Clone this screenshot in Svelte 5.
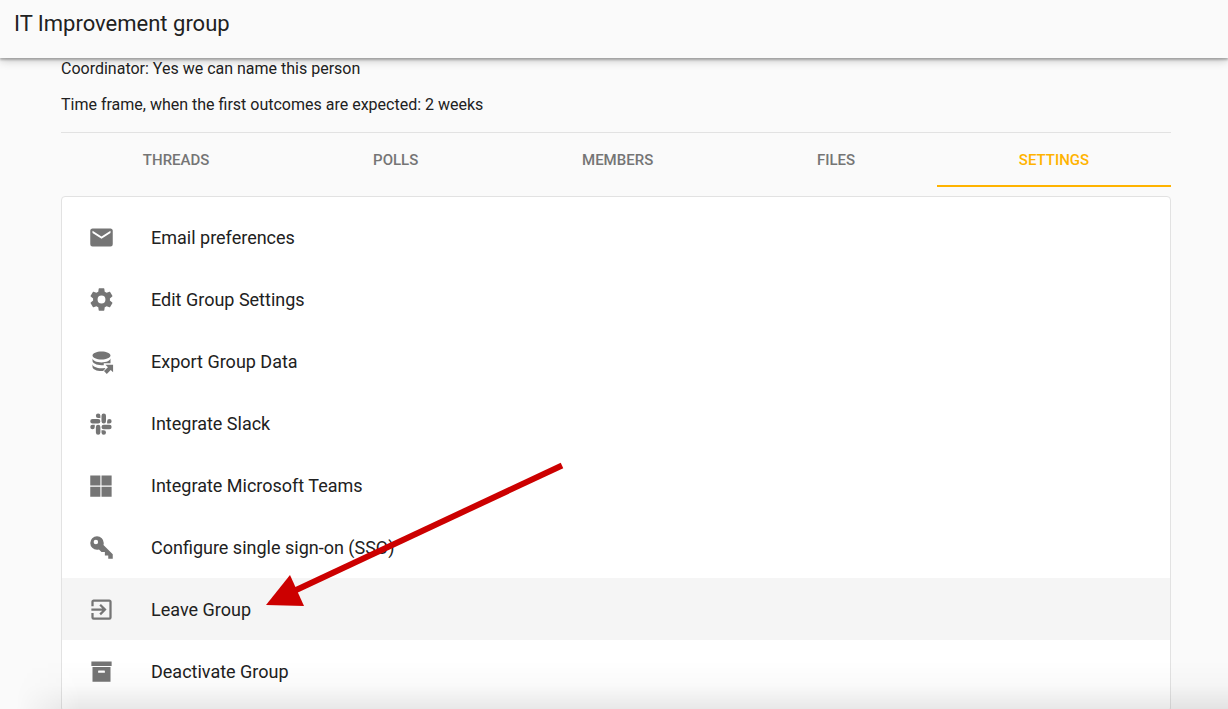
<script>
  const tabs = ['Threads', 'Polls', 'Members', 'Files', 'Settings'];
  let active = $state('Settings');

  const items = [
    {
      label: 'Email preferences',
      icon: 'M20,8L12,13L4,8V6L12,11L20,6M20,4H4C2.89,4 2,4.89 2,6V18A2,2 0 0,0 4,20H20A2,2 0 0,0 22,18V6C22,4.89 21.1,4 20,4Z'
    },
    {
      label: 'Edit Group Settings',
      icon: 'M12,15.5A3.5,3.5 0 0,1 8.5,12A3.5,3.5 0 0,1 12,8.5A3.5,3.5 0 0,1 15.5,12A3.5,3.5 0 0,1 12,15.5M19.43,12.97C19.47,12.65 19.5,12.33 19.5,12C19.5,11.67 19.47,11.34 19.43,11L21.54,9.37C21.73,9.22 21.78,8.95 21.66,8.73L19.66,5.27C19.54,5.05 19.27,4.96 19.05,5.05L16.56,6.05C16.04,5.66 15.5,5.32 14.87,5.07L14.5,2.42C14.46,2.18 14.25,2 14,2H10C9.75,2 9.54,2.18 9.5,2.42L9.13,5.07C8.5,5.32 7.96,5.66 7.44,6.05L4.95,5.05C4.73,4.96 4.46,5.05 4.34,5.27L2.34,8.73C2.21,8.95 2.27,9.22 2.46,9.37L4.57,11C4.53,11.34 4.5,11.67 4.5,12C4.5,12.33 4.53,12.65 4.57,12.97L2.46,14.63C2.27,14.78 2.21,15.05 2.34,15.27L4.34,18.73C4.46,18.95 4.73,19.03 4.95,18.95L7.44,17.94C7.96,18.34 8.5,18.68 9.13,18.93L9.5,21.58C9.54,21.82 9.75,22 10,22H14C14.25,22 14.46,21.82 14.5,21.58L14.87,18.93C15.5,18.67 16.04,18.34 16.56,17.94L19.05,18.95C19.27,19.03 19.54,18.95 19.66,18.73L21.66,15.27C21.78,15.05 21.73,14.78 21.54,14.63L19.43,12.97Z'
    },
    {
      label: 'Export Group Data',
      icon: 'M12,3C7.58,3 4,4.6 4,6.6C4,8.6 7.58,10.2 12,10.2C16.42,10.2 20,8.6 20,6.6C20,4.6 16.42,3 12,3M4,9.2V11.4C4,13.6 7.58,15.3 12,15.3H14V13.6H20V9.2C20,11.2 16.42,12.9 12,12.9C7.58,12.9 4,11.2 4,9.2M4,14.2V16.6C4,18.8 7.58,20.5 12,20.5L13.4,20.4L15.5,18.2L14.6,17.7C13.8,17.9 12.9,18 12,18C7.58,18 4,16.3 4,14.2M15.5,14.8L17.7,17L14.2,20.5L16.7,23L20.2,19.5L22.3,21.6V14.8H15.5Z'
    },
    {
      label: 'Integrate Slack',
      icon: 'M6,15A2,2 0 0,1 4,17A2,2 0 0,1 2,15A2,2 0 0,1 4,13H6V15M7,15A2,2 0 0,1 9,13A2,2 0 0,1 11,15V20A2,2 0 0,1 9,22A2,2 0 0,1 7,20V15M9,7A2,2 0 0,1 7,5A2,2 0 0,1 9,3A2,2 0 0,1 11,5V7H9M9,8A2,2 0 0,1 11,10A2,2 0 0,1 9,12H4A2,2 0 0,1 2,10A2,2 0 0,1 4,8H9M17,10A2,2 0 0,1 19,8A2,2 0 0,1 21,10A2,2 0 0,1 19,12H17V10M16,10A2,2 0 0,1 14,12A2,2 0 0,1 12,10V5A2,2 0 0,1 14,3A2,2 0 0,1 16,5V10M14,18A2,2 0 0,1 16,20A2,2 0 0,1 14,22A2,2 0 0,1 12,20V18H14M14,17A2,2 0 0,1 12,15A2,2 0 0,1 14,13H19A2,2 0 0,1 21,15A2,2 0 0,1 19,17H14Z'
    },
    {
      label: 'Integrate Microsoft Teams',
      icon: 'M2,3H11V12H2V3M11,22H2V13H11V22M21,3V12H12V3H21M21,22H12V13H21V22Z'
    },
    {
      label: 'Configure single sign-on (SSO)',
      icon: 'M22,18V22H18V19H15V16H12L9.74,13.74C9.19,13.91 8.61,14 8,14A6,6 0 0,1 2,8A6,6 0 0,1 8,2A6,6 0 0,1 14,8C14,8.61 13.91,9.19 13.74,9.74L22,18M7,5A2,2 0 0,0 5,7A2,2 0 0,0 7,9A2,2 0 0,0 9,7A2,2 0 0,0 7,5Z'
    },
    {
      label: 'Leave Group',
      highlighted: true,
      icon: 'M19,3H5C3.89,3 3,3.89 3,5V9H5V5H19V19H5V15H3V19A2,2 0 0,0 5,21H19A2,2 0 0,0 21,19V5C21,3.89 20.1,3 19,3M10.08,15.58L11.5,17L16.5,12L11.5,7L10.08,8.41L12.67,11H3V13H12.67L10.08,15.58Z'
    },
    {
      label: 'Deactivate Group',
      icon: 'M3,3H21V7H3V3M4,8H20V21H4V8M9.5,11A0.5,0.5 0 0,0 9,11.5V13H15V11.5A0.5,0.5 0 0,0 14.5,11H9.5Z'
    }
  ];
</script>

<div class="page">
  <header>
    <h1>IT Improvement group</h1>
  </header>

  <main>
    <section class="about">
      <p>Coordinator: Yes we can name this person</p>
      <p>Time frame, when the first outcomes are expected: 2 weeks</p>
    </section>

    <nav>
      {#each tabs as tab}
        <button class="tab" class:active={active === tab} onclick={() => (active = tab)}>{tab}</button>
      {/each}
    </nav>

    <div class="card">
      {#each items as item}
        <button class="row" class:highlighted={item.highlighted}>
          <svg viewBox="0 0 24 24" aria-hidden="true"><path d={item.icon} /></svg>
          <span>{item.label}</span>
        </button>
      {/each}
    </div>
  </main>

  <!-- Arrow pointing at the Leave Group row -->
  <svg class="arrow" viewBox="0 0 300 146" aria-hidden="true">
    <path d="M296 5.500L28 131" />
    <polygon points="0,145 24,115 38,146" />
  </svg>
  <div class="fade"></div>
</div>

<style>
  :global(body) {
    background: #fafafa;
  }

  .page {
    position: relative;
    height: 100vh;
    overflow: hidden;
    font-family: Roboto, 'Liberation Sans', sans-serif;
    color: #212121;
  }

  header {
    position: relative;
    z-index: 1;
    box-sizing: border-box;
    padding: 10px 14px 20px;
    background: #fafafa;
    box-shadow: 0 2px 2px rgba(0, 0, 0, 0.24), 0 2px 9px rgba(0, 0, 0, 0.24);
  }

  h1 {
    margin: 0;
    font-size: 22px;
    line-height: 28px;
    font-weight: 400;
  }

  main {
    padding: 0 57px 0 61px;
  }

  .about {
    padding: 1px 0 17px;
    border-bottom: 1px solid #e2e2e2;
  }

  p {
    margin: 0 0 16px;
    font-size: 16px;
    line-height: 20px;
  }

  p:last-child {
    margin: 0;
  }

  button {
    border: 0;
    background: none;
    font-family: inherit;
    cursor: pointer;
  }

  nav {
    display: flex;
    height: 54px;
    margin-bottom: 9px;
  }

  .tab {
    flex: 1 1 auto;
    padding: 2px 0 0;
    border-bottom: 2px solid transparent;
    color: #757575;
    font-size: 15px;
    font-weight: 500;
    text-transform: uppercase;
  }

  .tab.active {
    color: #ffb300;
    border-color: #ffb300;
  }

  .card {
    padding: 9px 0;
    border: 1px solid #e2e2e2;
    border-radius: 4px;
    background: #fff;
  }

  .row {
    display: flex;
    align-items: center;
    gap: 36px;
    width: 100%;
    height: 62px;
    padding: 0 26px;
    color: #212121;
    font-size: 18px;
    text-align: left;
  }

  .row.highlighted {
    background: #f5f5f5;
  }

  .row svg {
    width: 27px;
    height: 27px;
    fill: #757575;
  }

  .arrow {
    position: absolute;
    left: 266px;
    top: 460px;
    width: 300px;
    height: 146px;
    fill: #c00;
  }

  .arrow path {
    fill: none;
    stroke: #c00;
    stroke-width: 6;
  }

  .fade {
    position: absolute;
    left: 0;
    right: 0;
    bottom: 0;
    height: 48px;
    pointer-events: none;
    background: linear-gradient(transparent, rgba(0, 0, 0, 0.02) 50%, rgba(0, 0, 0, 0.09));
    mask-image: linear-gradient(to right, transparent 16px, #000 80px);
  }
</style>
